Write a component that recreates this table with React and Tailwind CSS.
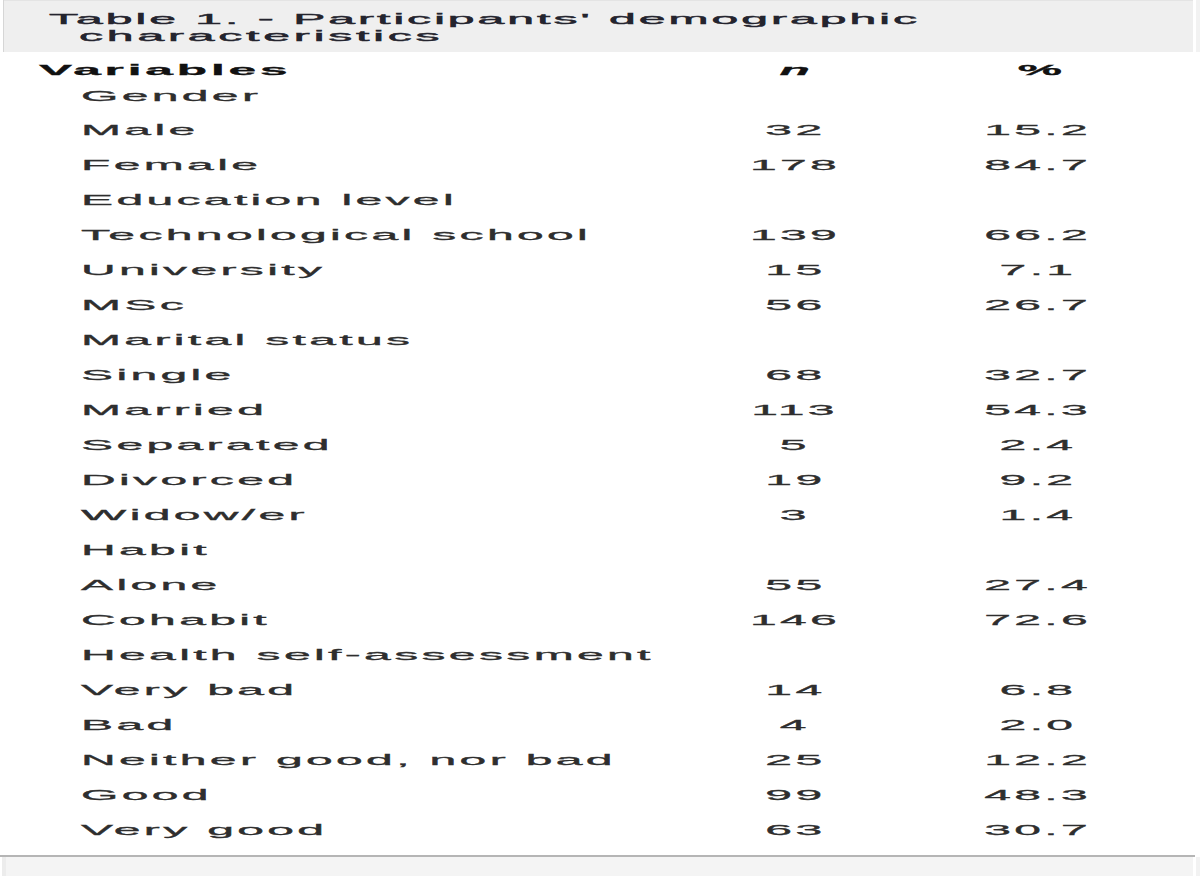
import React from 'react'

// rows of the demographics table: [label, n, %] — a row without n is a group heading
const rows = [
  ['Male', '32', '15.2'],
  ['Female', '178', '84.7'],
  ['Education level'],
  ['Technological school', '139', '66.2'],
  ['University', '15', '7.1'],
  ['MSc', '56', '26.7'],
  ['Marital status'],
  ['Single', '68', '32.7'],
  ['Married', '113', '54.3'],
  ['Separated', '5', '2.4'],
  ['Divorced', '19', '9.2'],
  ['Widow/er', '3', '1.4'],
  ['Habit'],
  ['Alone', '55', '27.4'],
  ['Cohabit', '146', '72.6'],
  ['Health self-assessment'],
  ['Very bad', '14', '6.8'],
  ['Bad', '4', '2.0'],
  ['Neither good, nor bad', '25', '12.2'],
  ['Good', '99', '48.3'],
  ['Very good', '63', '30.7'],
]

// stretched text, like the scaled-up original
function Wide({ children, className = '' }) {
  return (
    <span className={'inline-block whitespace-nowrap scale-x-[3.2] [-webkit-text-stroke:0.3px_currentColor] ' + className}>
      {children}
    </span>
  )
}

export default function App() {
  return (
    <div className="w-[1200px] h-[878px] bg-white overflow-hidden font-['Liberation_Sans',Arial,sans-serif] text-[#2e2e2e]">
      {/* ── Caption bar ─────────────────────────── */}
      <div className="flex h-[52px]">
        <div className="w-[3px] bg-white" />
        <div className="w-[1px] bg-[#d6d6d6]" />
        <div className="flex-1 bg-[#efefef] border-t border-[#e4e4e4] pt-[9px] text-[15px] leading-[17px] text-[#24242e]">
          <div className="pl-[45px]">
            <Wide className="origin-left tracking-[0.95px] [-webkit-text-stroke:0.45px_currentColor]">Table 1. - Participants' demographic</Wide>
          </div>
          <div className="pl-[75px]">
            <Wide className="origin-left tracking-[1.2px] [-webkit-text-stroke:0.45px_currentColor]">characteristics</Wide>
          </div>
        </div>
        <div className="w-[3px] bg-white" />
        <div className="w-[4px] bg-[#f2f2f2]" />
      </div>

      {/* ── Header row ──────────────────────────── */}
      <div className="grid grid-cols-[680px_230px_256px] h-[34px] pt-[1px] items-center text-[15.5px] leading-[17px] font-bold text-[#111]">
        <div className="pl-[39px]">
          <Wide className="origin-left tracking-[1.2px]">Variables</Wide>
        </div>
        <div className="text-center">
          <Wide className="origin-center italic">n</Wide>
        </div>
        <div className="text-center pl-[4px]">
          <Wide className="origin-center">%</Wide>
        </div>
      </div>

      {/* ── Gender heading ──────────────────────── */}
      <div className="h-[25px] pt-[1px] pl-[81px] text-[15px] leading-[17px]">
        <Wide className="origin-left tracking-[1.05px]">Gender</Wide>
      </div>

      {/* ── Body rows ───────────────────────────── */}
      <div className="pt-[1px] pb-[8px]">
        {rows.map(([label, n, pct]) => (
          <div key={label} className="grid grid-cols-[680px_230px_256px] h-[35px] items-center text-[15px] leading-[17px]">
            <div className="pl-[81px]">
              <Wide className="origin-left tracking-[1.05px]">{label}</Wide>
            </div>
            <div className="text-center">
              {n && <Wide className="origin-center tracking-[1.05px]">{n}</Wide>}
            </div>
            <div className="text-center">
              {pct && <Wide className="origin-center tracking-[1.05px]">{pct}</Wide>}
            </div>
          </div>
        ))}
      </div>

      {/* ── Footer bar ──────────────────────────── */}
      <div className="h-[2px] w-[1195px] bg-[#b5b5b5]" />
      <div className="flex h-[19px]">
        <div className="w-[2px] bg-white" />
        <div className="w-[4px] bg-[#ececec]" />
        <div className="w-[1187px] bg-[#f4f4f4]" />
        <div className="w-[3px] bg-white" />
        <div className="w-[4px] bg-[#f2f2f2]" />
      </div>
    </div>
  )
}
